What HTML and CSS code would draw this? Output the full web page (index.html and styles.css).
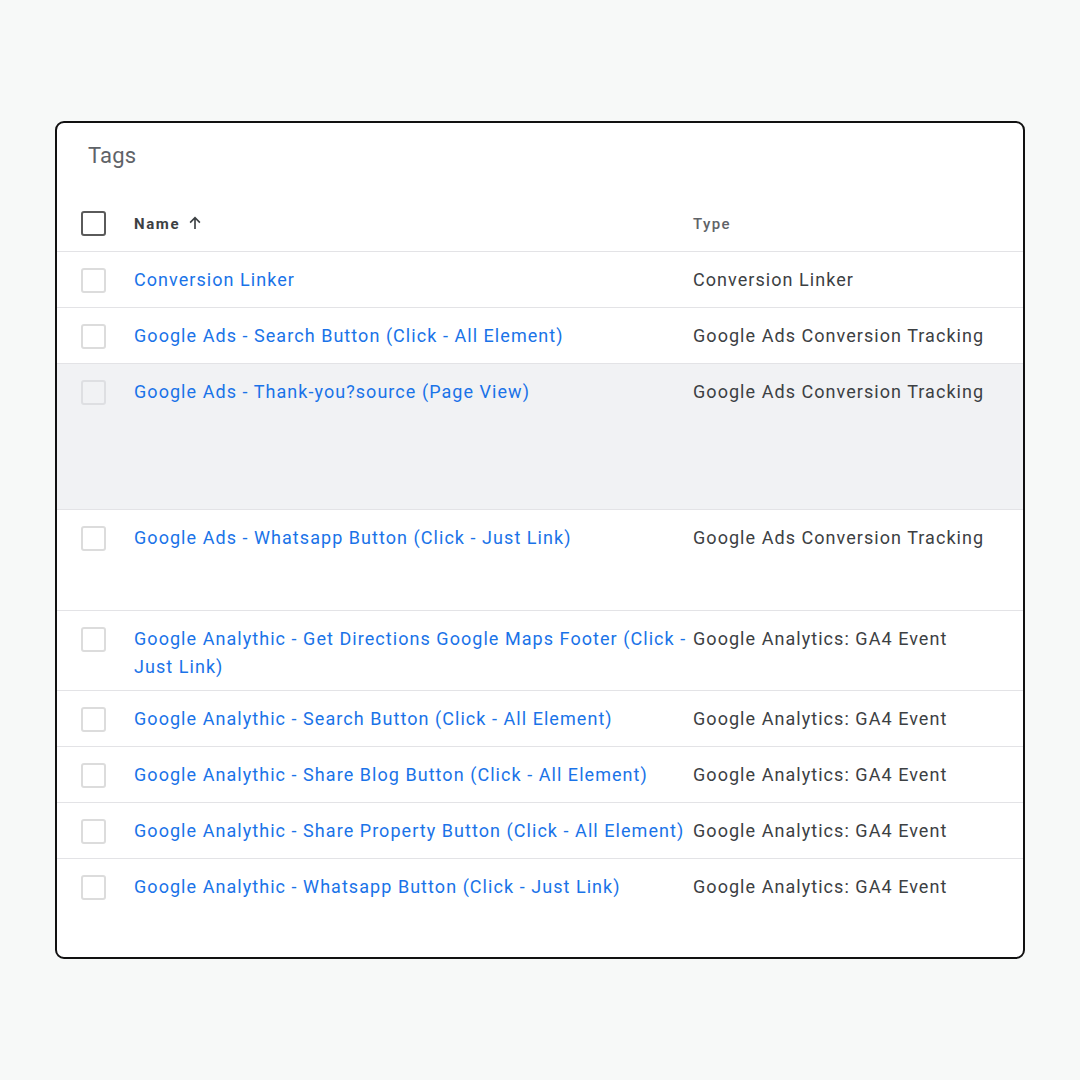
FILE: index.html
```html
<!DOCTYPE html>
<html lang="en">
<head>
<meta charset="utf-8">
<title>Tags</title>
<link rel="stylesheet" href="styles.css">
</head>
<body>
<div class="page">
  <section class="card">
    <h1 class="title">Tags</h1>
    <div class="table">
      <div class="row head">
        <span class="box box-head"></span>
        <div class="name-head">Name
          <svg class="arrow" viewBox="0 0 24 24" width="18" height="18"><path d="M12 20V5M5.5 11.5 12 5l6.5 6.5" fill="none" stroke="#3c4043" stroke-width="2.2"/></svg>
        </div>
        <div class="type-head">Type</div>
      </div>
      <div class="row">
        <span class="box"></span>
        <a class="name">Conversion Linker</a>
        <div class="type">Conversion Linker</div>
      </div>
      <div class="row">
        <span class="box"></span>
        <a class="name">Google Ads - Search Button (Click - All Element)</a>
        <div class="type">Google Ads Conversion Tracking</div>
      </div>
      <div class="row hover tall-a">
        <span class="box"></span>
        <a class="name">Google Ads - Thank-you?source (Page View)</a>
        <div class="type">Google Ads Conversion Tracking</div>
      </div>
      <div class="row tall-b">
        <span class="box"></span>
        <a class="name">Google Ads - Whatsapp Button (Click - Just Link)</a>
        <div class="type">Google Ads Conversion Tracking</div>
      </div>
      <div class="row">
        <span class="box"></span>
        <a class="name">Google Analythic - Get Directions Google Maps Footer (Click - Just Link)</a>
        <div class="type">Google Analytics: GA4 Event</div>
      </div>
      <div class="row">
        <span class="box"></span>
        <a class="name">Google Analythic - Search Button (Click - All Element)</a>
        <div class="type">Google Analytics: GA4 Event</div>
      </div>
      <div class="row">
        <span class="box"></span>
        <a class="name">Google Analythic - Share Blog Button (Click - All Element)</a>
        <div class="type">Google Analytics: GA4 Event</div>
      </div>
      <div class="row">
        <span class="box"></span>
        <a class="name">Google Analythic - Share Property Button (Click - All Element)</a>
        <div class="type">Google Analytics: GA4 Event</div>
      </div>
      <div class="row last">
        <span class="box"></span>
        <a class="name">Google Analythic - Whatsapp Button (Click - Just Link)</a>
        <div class="type">Google Analytics: GA4 Event</div>
      </div>
    </div>
  </section>
</div>
</body>
</html>
```

FILE: styles.css
```css
* { box-sizing: border-box; }
html, body { margin: 0; padding: 0; }
body {
  background: #f7f9f8;
  font-family: Roboto, "Liberation Sans", sans-serif;
  width: 1080px;
  height: 1080px;
}
.page {
  padding: 121px 55px 0 55px;
}
.card {
  width: 970px;
  height: 838px;
  background: #fff;
  border: 2px solid #111;
  border-radius: 9px;
  overflow: hidden;
}
.title {
  margin: 0;
  padding: 17px 0 0 31px;
  height: 73px;
  font-size: 22px;
  line-height: 32px;
  font-weight: 400;
  color: #5f6368;
  letter-spacing: 0.2px;
}
.row {
  display: grid;
  grid-template-columns: 77px 559px 1fr;
  align-items: start;
  min-height: 56px;
  padding: 14px 0 9px 0;
  border-bottom: 1px solid #e3e3e6;
  font-size: 18px;
  line-height: 28px;
  letter-spacing: 1.05px;
}
.row.head {
  align-items: center;
  padding: 0;
  height: 56px;
}
.row.last { border-bottom: none; }
.row.hover { background: #f1f2f4; }
.row.tall-a { min-height: 146px; }
.row.tall-b { min-height: 101px; }
.box {
  display: block;
  width: 25px;
  height: 25px;
  margin: 2px 0 0 24px;
  border: 2px solid #dcdcdc;
  border-radius: 3px;
  background: #fff;
}
.row.hover .box { background: transparent; border-color: #dedfe2; }
.box.box-head {
  margin-top: 0;
  border-color: #5a5a5a;
}
.name-head {
  display: flex;
  align-items: center;
  gap: 6px;
  font-size: 15px;
  font-weight: 700;
  color: #3c4043;
  letter-spacing: 1.6px;
}
.arrow { display: block; margin-top: -2px; }
.type-head {
  font-size: 15px;
  font-weight: 500;
  color: #5f6368;
  letter-spacing: 1.4px;
}
.name {
  color: #1a73e8;
  text-decoration: none;
  padding-right: 2px;
}
.type {
  color: #3c4043;
}
```
